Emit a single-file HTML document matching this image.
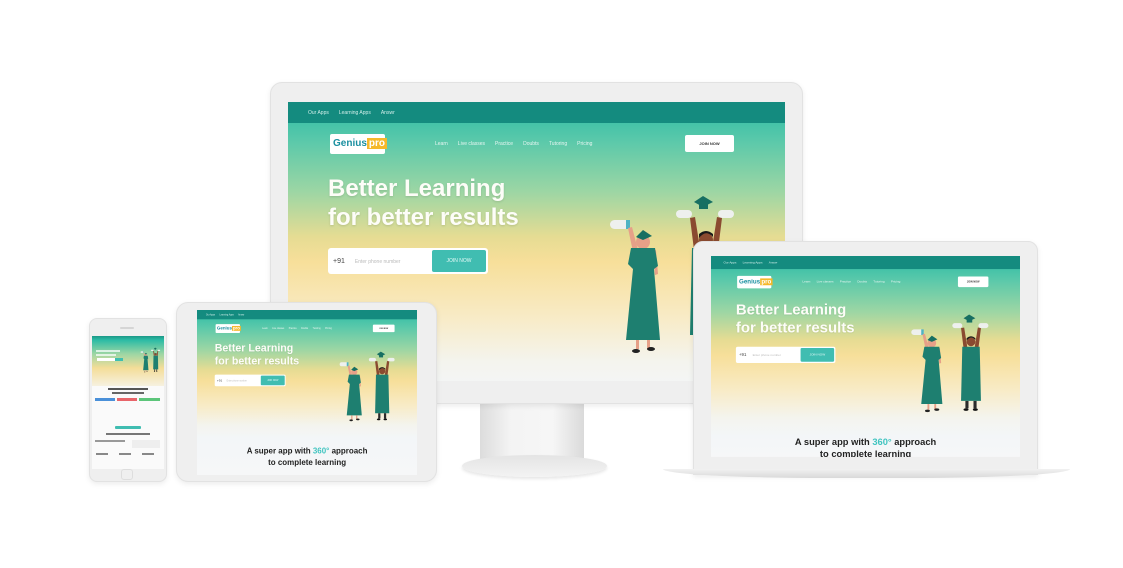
<!DOCTYPE html>
<html><head><meta charset="utf-8"><style>
*{margin:0;padding:0;box-sizing:border-box}
body{width:1123px;height:568px;background:#fff;position:relative;overflow:hidden;font-family:"Liberation Sans",sans-serif}
.abs{position:absolute}
.frame{position:absolute;background:#efefef;border:1px solid #e2e2e2;box-shadow:0 2px 6px rgba(0,0,0,.08)}
.scr{position:absolute;overflow:hidden}
.d{position:absolute;left:0;top:0;width:497px;transform-origin:0 0;
 background:linear-gradient(180deg,#29bba6 0px,#5cc9aa 40px,#9dd6a4 90px,#e6dc93 135px,#f7df9a 160px,#f8ebc6 215px,#f4f4ee 260px,#f3f6f8 290px,#f6f7f8 100%)}
.tb{position:absolute;left:0;top:0;width:100%;height:21px;background:#148b7f;color:#cfeee9;font-size:5px;padding:8px 20px}
.tb span,.nav span{margin-right:10px}
.logo{position:absolute;left:42px;top:32px;width:55px;height:20px;background:#fff;border-radius:2px;font-weight:bold;font-size:10px;color:#1a8fa0;padding:4px 3px}
.logo b{background:#f5b82a;color:#fff;padding:0 2px}
.nav{position:absolute;left:147px;top:39px;font-size:5px;color:#e8f6f2}
.join{position:absolute;left:397px;top:33px;width:49px;height:17px;background:#fff;border-radius:2px;font-size:4px;color:#333;text-align:center;line-height:17px;font-weight:bold}
.h1{position:absolute;left:40px;top:72px;font-size:24px;line-height:29px;font-weight:bold;color:#fdfdf8;text-shadow:0 1px 2px rgba(0,0,0,.12)}
.inp{position:absolute;left:40px;top:146px;width:160px;height:26px;background:#fff;border-radius:3px;font-size:5px;color:#bbb;padding:10px 5px}
.inp span{color:#444;font-size:7px;margin-right:10px}
.inp i{position:absolute;right:2px;top:2px;width:54px;height:22px;background:#40bdb1;border-radius:2px;color:#e6fbf8;font-style:normal;text-align:center;line-height:22px;font-size:5px}
.h2{position:absolute;left:0;width:100%;top:292px;text-align:center;font-size:15px;font-weight:bold;color:#222;line-height:19px}
.h2 em{font-style:normal;color:#40c4c0}
.fig{position:absolute;left:318px;top:88px;width:140px;height:170px}
</style></head><body>

<svg width="0" height="0" style="position:absolute"><defs>
<g id="figs">
 <rect x="4" y="30" width="20" height="9" rx="4.5" fill="#eef0ee"/><rect x="20" y="30" width="4" height="9" fill="#4fb3c3"/>
 <path d="M27 62 L22 38 L26 37 L32 60Z" fill="#e6a088"/>
 <path d="M47 62 L49 85 L52 84 L50 60Z" fill="#e6a088"/>
 <circle cx="37" cy="52" r="7" fill="#e6a088"/>
 <path d="M30 47 L37 40 L46 46 L37 50Z" fill="#176f62"/>
 <path d="M25 58 L49 58 L52 76 L48 79 L54 150 L20 150 L27 79 L22 74Z" fill="#1e7f70"/>
 <rect x="30" y="150" width="3" height="9" fill="#e6a088"/><rect x="41" y="150" width="3" height="9" fill="#e6a088"/>
 <ellipse cx="30" cy="161" rx="4" ry="2" fill="#222"/><ellipse cx="45" cy="159" rx="4" ry="2" fill="#222"/>
 <rect x="70" y="20" width="16" height="8" rx="4" fill="#eef0ee"/><rect x="112" y="20" width="16" height="8" rx="4" fill="#eef0ee"/>
 <path d="M88 60 L84 28 L89 27 L94 58Z" fill="#8a4a30"/>
 <path d="M112 60 L116 28 L111 27 L106 58Z" fill="#8a4a30"/>
 <path d="M88 12 L97 6 L107 12 L97 17Z" fill="#176f62"/><rect x="93" y="14" width="9" height="5" fill="#176f62"/>
 <circle cx="100" cy="50" r="7" fill="#8a4a30"/><path d="M93 48 Q100 39 107 47 L107 44 Q100 38 93 44Z" fill="#1a1a1a"/>
 <path d="M86 58 L114 58 L116 145 L84 145Z" fill="#1e7f70"/>
 <rect x="91" y="145" width="5" height="12" fill="#2b2b2b"/><rect x="104" y="145" width="5" height="12" fill="#2b2b2b"/>
 <ellipse cx="92" cy="159" rx="4" ry="2" fill="#111"/><ellipse cx="107" cy="159" rx="4" ry="2" fill="#111"/>
</g></defs></svg>

<!-- MONITOR -->
<div class="abs" style="left:480px;top:398px;width:104px;height:62px;background:linear-gradient(90deg,#dcdcdc,#f4f4f4 30%,#f6f6f6 70%,#dadada)"></div>
<div class="abs" style="left:462px;top:455px;width:145px;height:22px;border-radius:50%;background:linear-gradient(180deg,#e4e4e4,#f3f3f3);box-shadow:0 2px 3px rgba(0,0,0,.1)"></div>
<div class="frame" style="left:270px;top:82px;width:533px;height:322px;border-radius:12px"></div>
<div class="scr" style="left:288px;top:102px;width:497px;height:279px">
 <div class="d" style="height:279px">
  <div class="tb"><span>Our Apps</span><span>Learning Apps</span><span>Answr</span></div>
  <div class="logo">Genius<b>pro</b></div>
  <div class="nav"><span>Learn</span><span>Live classes</span><span>Practice</span><span>Doubts</span><span>Tutoring</span><span>Pricing</span></div>
  <div class="join">JOIN NOW</div>
  <div class="h1">Better Learning<br>for better results</div>
  <div class="inp"><span>+91</span>Enter phone number<i>JOIN NOW</i></div>
  <svg class="fig" viewBox="0 0 140 170"><use href="#figs"/></svg>
 </div>
</div>

<!-- LAPTOP -->
<div class="frame" style="left:693px;top:241px;width:345px;height:234px;border-radius:10px 10px 0 0"></div>
<div class="abs" style="left:663px;top:469px;width:407px;height:9px;background:linear-gradient(180deg,#f1f1f1,#d9d9d9);border-radius:0 0 40% 40%/0 0 100% 100%"></div>
<div class="scr" style="left:711px;top:256px;width:309px;height:201px">
 <div class="d" style="height:323px;transform:scale(.622)">
  <div class="tb"><span>Our Apps</span><span>Learning Apps</span><span>Answr</span></div>
  <div class="logo">Genius<b>pro</b></div>
  <div class="nav"><span>Learn</span><span>Live classes</span><span>Practice</span><span>Doubts</span><span>Tutoring</span><span>Pricing</span></div>
  <div class="join">JOIN NOW</div>
  <div class="h1">Better Learning<br>for better results</div>
  <div class="inp"><span>+91</span>Enter phone number<i>JOIN NOW</i></div>
  <svg class="fig" viewBox="0 0 140 170"><use href="#figs"/></svg>
  <div class="h2" style="top:290px">A super app with <em>360°</em> approach<br>to complete learning</div>
 </div>
</div>

<!-- TABLET -->
<div class="frame" style="left:176px;top:302px;width:261px;height:180px;border-radius:12px"></div>
<div class="scr" style="left:197px;top:310px;width:220px;height:165px;background:#f6f7f8">
 <div class="d" style="height:372px;transform:scale(.443)">
  <div class="tb"><span>Our Apps</span><span>Learning Apps</span><span>Answr</span></div>
  <div class="logo">Genius<b>pro</b></div>
  <div class="nav"><span>Learn</span><span>Live classes</span><span>Practice</span><span>Doubts</span><span>Tutoring</span><span>Pricing</span></div>
  <div class="join">JOIN NOW</div>
  <div class="h1">Better Learning<br>for better results</div>
  <div class="inp"><span>+91</span>Enter phone number<i>JOIN NOW</i></div>
  <svg class="fig" viewBox="0 0 140 170"><use href="#figs"/></svg>
  <div class="h2" style="top:305px;font-size:18px;line-height:26px">A super app with <em>360°</em> approach<br>to complete learning</div>
 </div>
</div>

<!-- PHONE -->
<div class="frame" style="left:89px;top:318px;width:78px;height:164px;border-radius:8px"></div>
<div class="abs" style="left:120px;top:327px;width:14px;height:2px;background:#d5d5d5;border-radius:1px"></div>
<div class="abs" style="left:121px;top:469px;width:12px;height:11px;border:1px solid #ddd;border-radius:3px"></div>
<div class="scr" style="left:92px;top:336px;width:72px;height:133px;background:#fafafa">
 <div class="abs" style="left:0;top:0;width:72px;height:50px;background:linear-gradient(180deg,#1b9787 0,#2bbba5 4px,#9dd6a4 18px,#f4dd98 32px,#f6f1e0 50px)"></div>
 <div class="abs" style="left:4px;top:14px;width:24px;height:2px;background:#fff;opacity:.7"></div>
 <div class="abs" style="left:4px;top:18px;width:20px;height:2px;background:#fff;opacity:.7"></div>
 <div class="abs" style="left:5px;top:22px;width:18px;height:3px;background:#fff"></div>
 <div class="abs" style="left:23px;top:22px;width:8px;height:3px;background:#3ebfb0"></div>
 <svg class="abs" style="left:48px;top:10px" width="22" height="28" viewBox="0 0 140 170"><use href="#figs"/></svg>
 <div class="abs" style="left:16px;top:52px;width:40px;height:2px;background:#555"></div>
 <div class="abs" style="left:20px;top:56px;width:32px;height:2px;background:#666"></div>
 <div class="abs" style="left:3px;top:62px;width:20px;height:3px;background:#4a90d9"></div>
 <div class="abs" style="left:25px;top:62px;width:20px;height:3px;background:#e8656a"></div>
 <div class="abs" style="left:47px;top:62px;width:21px;height:3px;background:#5cc57a"></div>
 <div class="abs" style="left:23px;top:90px;width:26px;height:3px;background:#40bdb1;border-radius:1px"></div>
 <div class="abs" style="left:14px;top:97px;width:44px;height:2px;background:#777"></div>
 <div class="abs" style="left:3px;top:104px;width:30px;height:2px;background:#999"></div>
 <div class="abs" style="left:40px;top:104px;width:28px;height:8px;background:#eee"></div>
 <div class="abs" style="left:4px;top:117px;width:12px;height:2px;background:#888"></div>
 <div class="abs" style="left:27px;top:117px;width:12px;height:2px;background:#888"></div>
 <div class="abs" style="left:50px;top:117px;width:12px;height:2px;background:#888"></div>
</div>
</body></html>
